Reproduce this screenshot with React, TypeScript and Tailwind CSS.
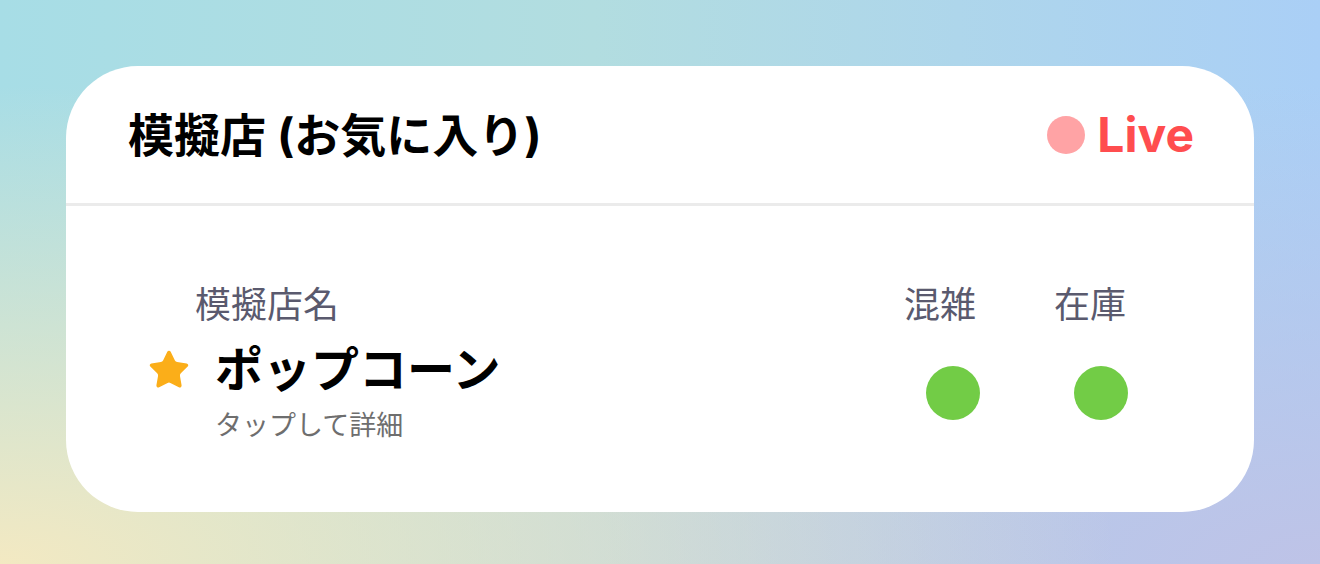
import React from "react";

function StarIcon() {
  return (
    <svg viewBox="0 0 24 24" className="h-[44px] w-[44px] shrink-0" aria-hidden="true">
      <path
        d="M11.525 2.295a.53.53 0 0 1 .95 0l2.31 4.679a2.123 2.123 0 0 0 1.595 1.16l5.166.756a.53.53 0 0 1 .294.904l-3.736 3.638a2.123 2.123 0 0 0-.611 1.878l.882 5.14a.53.53 0 0 1-.771.56l-4.618-2.428a2.122 2.122 0 0 0-1.973 0L6.396 21.01a.53.53 0 0 1-.77-.56l.881-5.139a2.122 2.122 0 0 0-.611-1.879L2.16 9.795a.53.53 0 0 1 .294-.906l5.165-.755a2.122 2.122 0 0 0 1.597-1.16z"
        fill="#fbae19"
        stroke="#fbae19"
        strokeWidth="1"
        strokeLinejoin="round"
      />
    </svg>
  );
}

function StatusDot({ offset }: { offset: string }) {
  return (
    <div className="w-[150px]">
      <div className={`h-[54px] w-[54px] rounded-full bg-[#72cc46] ${offset}`} />
    </div>
  );
}

export default function App() {
  return (
    <div className="h-[564px] w-full p-[66px] font-['Inter','Noto_Sans_CJK_JP',sans-serif] bg-[radial-gradient(ellipse_at_0%_100%,#f3e9c2_0%,rgba(243,233,194,0)_60%),radial-gradient(ellipse_at_100%_100%,#bec3e7_0%,rgba(190,195,231,0)_60%),linear-gradient(90deg,#a7dde6_0%,#b2dde0_45%,#aacff6_100%)]">
      <div className="overflow-hidden rounded-[72px] bg-white">
        {/* Header */}
        <div className="flex h-[140px] items-center justify-between border-b-[3px] border-[#ebebeb] pl-[62px] pr-[60px]">
          <h1 className="text-[46px] font-bold leading-none text-black">模擬店 (お気に入り)</h1>
          <div className="flex items-center gap-[12px]">
            <span className="h-[38px] w-[38px] rounded-full bg-[#ffa3a5]" />
            <span className="text-[48px] font-bold leading-none text-[#ff4d4f]">Live</span>
          </div>
        </div>

        {/* Body */}
        <div className="pl-[81px] pr-[89px] pt-[78px] pb-[68px]">
          <div className="flex items-center text-[36px] leading-[42px] text-[#5a5a6e]">
            <span className="ml-[48px] flex-1">模擬店名</span>
            <span className="w-[150px] text-center">混雑</span>
            <span className="w-[150px] text-center">在庫</span>
          </div>

          <div className="mt-[16px] flex items-center">
            <div className="flex flex-1 flex-col">
              <div className="flex items-center gap-[24px]">
                <StarIcon />
                <span className="text-[48px] font-bold leading-[56px] text-black">ポップコーン</span>
              </div>
              <span className="ml-[68px] mt-[10px] text-[27px] leading-[36px] text-[#6e6e6e]">タップして詳細</span>
            </div>
            <StatusDot offset="ml-[61px]" />
            <StatusDot offset="ml-[59px]" />
          </div>
        </div>
      </div>
    </div>
  );
}
